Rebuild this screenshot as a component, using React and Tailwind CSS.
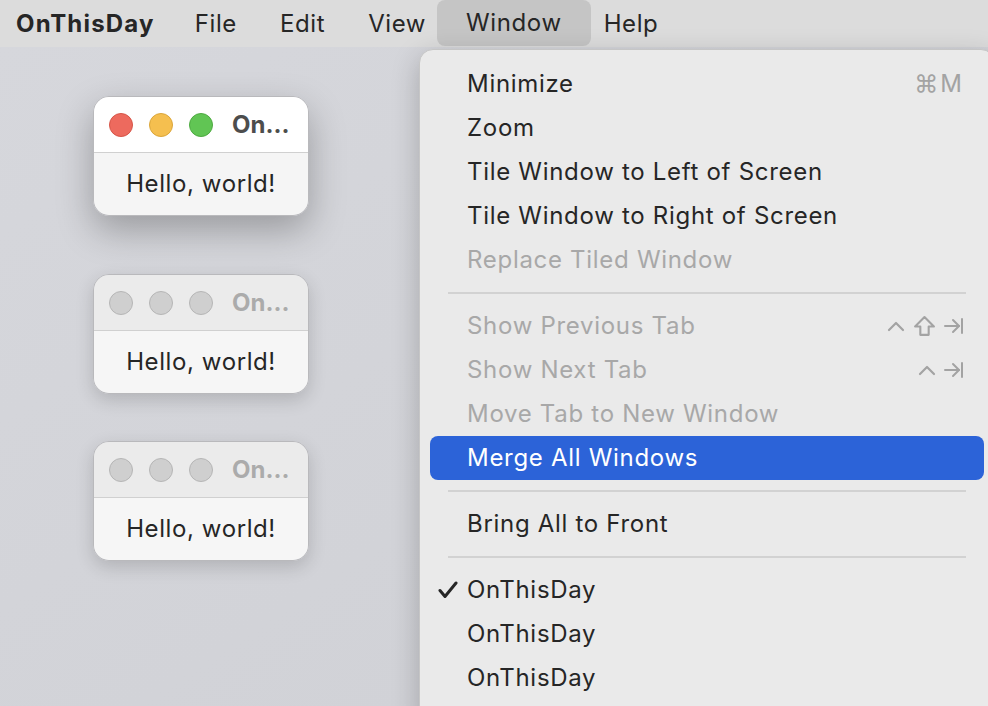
const FONT = "font-['Inter','Noto_Sans',sans-serif]"

function ControlKey() {
  return (
    <svg width="18" height="12" viewBox="0 0 18 12" fill="none" stroke="currentColor" strokeWidth="2.2" strokeLinecap="round" strokeLinejoin="round">
      <path d="M2 10 L9 3 L16 10" />
    </svg>
  )
}

function ShiftKey() {
  return (
    <svg width="23" height="23" viewBox="0 0 22 22" fill="none" stroke="currentColor" strokeWidth="2" strokeLinejoin="round">
      <path d="M11 2 L20 11 L15 11 L15 19 L7 19 L7 11 L2 11 Z" />
    </svg>
  )
}

function TabKey() {
  return (
    <svg width="20" height="18" viewBox="0 0 20 18" fill="none" stroke="currentColor" strokeWidth="2" strokeLinecap="round" strokeLinejoin="round">
      <path d="M1 9 H15" />
      <path d="M9 3 L15 9 L9 15" />
      <path d="M18 2 V16" />
    </svg>
  )
}

function Check() {
  return (
    <svg width="20" height="18" viewBox="0 0 20 18" fill="none" stroke="#262626" strokeWidth="3" strokeLinecap="round" strokeLinejoin="round">
      <path d="M2 9.5 L7 15.5 L18 2" />
    </svg>
  )
}

function Item({ label, disabled, active, checked, shortcut }) {
  return (
    <div
      className={`mx-[10px] h-[44px] flex items-center pl-[8px] pr-[20px] rounded-[8px] text-[24px] tracking-[0.7px] ${
        active ? "bg-[#2c63d8] text-white" : disabled ? "text-[#a8a8a8]" : "text-[#262626]"
      }`}
    >
      <span className="w-[29px] flex items-center">{checked && <Check />}</span>
      <span className="flex-1">{label}</span>
      {shortcut && <span className="flex items-center gap-[8px] text-[#a3a3a3]">{shortcut}</span>}
    </div>
  )
}

function Separator() {
  return (
    <div className="h-[22px] flex items-center px-[28px]">
      <div className="h-[2px] w-full bg-[#d2d2d2]" />
    </div>
  )
}

function Light({ color }) {
  return <span className={`w-[24px] h-[24px] rounded-full border ${color}`} />
}

function WindowCard({ active, className = "" }) {
  return (
    <div
      className={`w-[216px] h-[120px] shrink-0 rounded-[16px] overflow-hidden border border-[#b9b9bc] flex flex-col ${className} ${
        active
          ? "shadow-[0_14px_36px_rgba(0,0,0,0.28)]"
          : "shadow-[0_6px_18px_rgba(0,0,0,0.16)]"
      }`}
    >
      <div
        className={`h-[56px] flex items-center pl-[15px] border-b border-[#d0d0d0] ${
          active ? "bg-white" : "bg-[#ebebeb]"
        }`}
      >
        <div className="flex gap-[16px]">
          {active ? (
            <>
              <Light color="bg-[#ed6a5e] border-[#d65548]" />
              <Light color="bg-[#f5bf4f] border-[#dba63b]" />
              <Light color="bg-[#61c554] border-[#4eaa41]" />
            </>
          ) : (
            <>
              <Light color="bg-[#cfcfcf] border-[#b6b6b6]" />
              <Light color="bg-[#cfcfcf] border-[#b6b6b6]" />
              <Light color="bg-[#cfcfcf] border-[#b6b6b6]" />
            </>
          )}
        </div>
        <span className={`ml-[19px] text-[24px] font-bold ${active ? "text-[#4d4d4d]" : "text-[#ababab]"}`}>
          On...
        </span>
      </div>
      <div className={`flex-1 flex items-center justify-center text-[24px] tracking-[0.6px] text-[#262626] ${active ? "bg-[#f5f5f5]" : "bg-[#f6f6f6]"}`}>
        Hello, world!
      </div>
    </div>
  )
}

export default function App() {
  return (
    <div className={`relative w-[988px] h-[706px] overflow-hidden bg-[#d4d5da] ${FONT}`}>
      {/* menu bar */}
      <div className="h-[47px] bg-[#dcdcdc] flex items-center pl-[16px] text-[24px] tracking-[0.6px] text-[#262626]">
        <span className="font-bold tracking-[1.2px] mr-[40px]">OnThisDay</span>
        <span className="mr-[43px]">File</span>
        <span className="mr-[43px]">Edit</span>
        <span className="mr-[11px]">View</span>
        <span className="h-[46px] self-start px-[29px] flex items-center rounded-[8px] bg-[#c5c5c5]">Window</span>
        <span className="ml-[13px]">Help</span>
      </div>

      {/* desktop */}
      <div className="h-[659px] bg-gradient-to-br from-[#d6d7dc] to-[#cfd0d5] pl-[93px] pt-[49px] flex flex-col">
        <WindowCard active />
        <WindowCard className="mt-[58px]" />
        <WindowCard className="mt-[47px]" />
      </div>

      {/* Window menu */}
      <div className="absolute top-[49px] left-[419px] w-[576px] h-[680px] rounded-[14px] bg-[#eaeaea] border border-[#c6c6c6] shadow-[0_8px_28px_rgba(0,0,0,0.22)] pt-[12px]">
        <Item label="Minimize" shortcut={<span className="text-[24px] tracking-[2px]">⌘M</span>} />
        <Item label="Zoom" />
        <Item label="Tile Window to Left of Screen" />
        <Item label="Tile Window to Right of Screen" />
        <Item label="Replace Tiled Window" disabled />
        <Separator />
        <Item label="Show Previous Tab" disabled shortcut={<><ControlKey /><ShiftKey /><TabKey /></>} />
        <Item label="Show Next Tab" disabled shortcut={<><ControlKey /><TabKey /></>} />
        <Item label="Move Tab to New Window" disabled />
        <Item label="Merge All Windows" active />
        <Separator />
        <Item label="Bring All to Front" />
        <Separator />
        <Item label="OnThisDay" checked />
        <Item label="OnThisDay" />
        <Item label="OnThisDay" />
      </div>
    </div>
  )
}
